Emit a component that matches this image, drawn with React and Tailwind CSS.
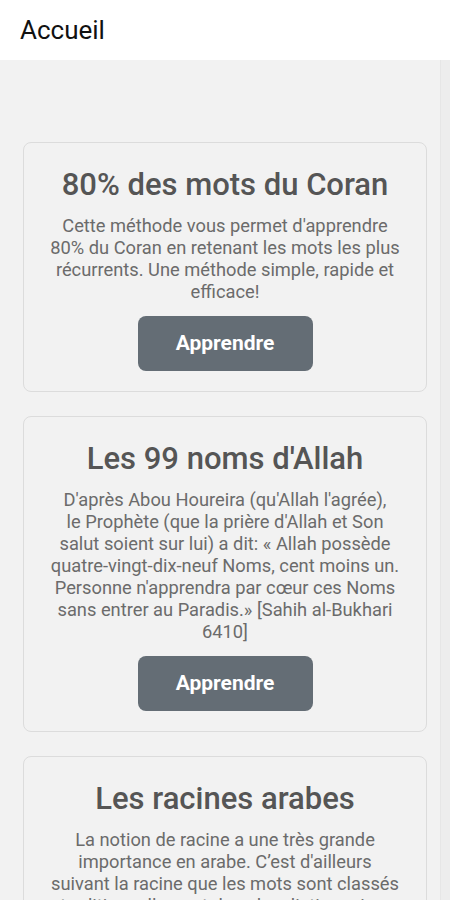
import React from 'react'

const cards = [
  {
    title: '80% des mots du Coran',
    text: ["Cette méthode vous permet d'apprendre 80% du Coran en retenant les mots les plus récurrents. Une méthode simple, rapide et efficace!"],
  },
  {
    title: "Les 99 noms d'Allah",
    text: [
      "D'après Abou Houreira (qu'Allah l'agrée),",
      "le Prophète (que la prière d'Allah et Son salut soient sur lui) a dit: « Allah possède quatre-vingt-dix-neuf Noms, cent moins un. Personne n'apprendra par cœur ces Noms sans entrer au Paradis.» [Sahih al-Bukhari 6410]",
    ],
  },
  {
    title: 'Les racines arabes',
    text: ["La notion de racine a une très grande importance en arabe. C’est d'ailleurs suivant la racine que les mots sont classés traditionnellement dans les dictionnaires arabes."],
  },
]

function Card({ title, text }) {
  return (
    <div className="w-[404px] shrink-0 rounded-lg border border-[#dcdcdc] bg-[#f2f2f2] px-[26px] pt-6 pb-5 flex flex-col items-center text-center">
      <h2 className="text-[31px] leading-[36px] font-medium text-[#555555]">{title}</h2>
      <p className="mt-3 text-[18.3px] leading-[22px] text-[#6b6b6b]">
        {text.map((t, i) => (
          <React.Fragment key={i}>
            {i > 0 && <br />}
            {t}
          </React.Fragment>
        ))}
      </p>
      <button className="mt-[13px] w-[175px] h-[55px] rounded-lg bg-[#646d75] text-white text-[21px] font-bold">
        Apprendre
      </button>
    </div>
  )
}

export default function App() {
  return (
    <div className="w-[450px] h-[900px] overflow-hidden flex flex-col bg-[#f2f2f2]" style={{ fontFamily: 'Roboto, "Noto Sans", sans-serif' }}>
      <header className="h-[60px] shrink-0 bg-white flex items-center px-5">
        <h1 className="text-[26px] text-[#111111]">Accueil</h1>
      </header>
      <div className="flex flex-1 min-h-0">
        <main className="flex-1 pl-[23px] pt-[82px] flex flex-col gap-[24px]">
          {cards.map((c) => (
            <Card key={c.title} {...c} />
          ))}
        </main>
        <div className="w-[10px] shrink-0 bg-[#ededed] border-l border-[#e6e6e6]" />
      </div>
    </div>
  )
}
